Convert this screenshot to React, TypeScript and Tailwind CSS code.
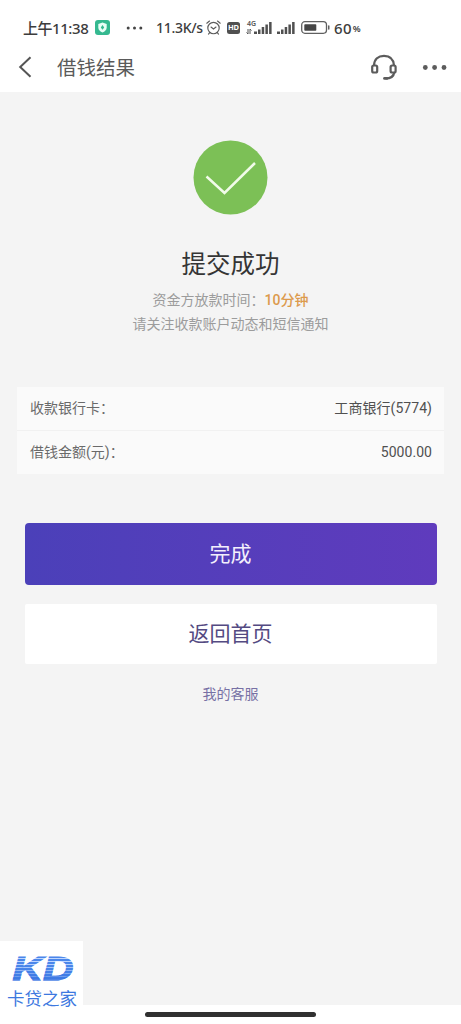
import type { ReactNode } from "react";

function SignalBars() {
  return (
    <svg className="h-[12px] w-[18px] shrink-0" viewBox="0 0 18 12" fill="#505050">
      <rect x="0" y="9.5" width="3" height="2.5" />
      <rect x="4" y="7.5" width="2.5" height="4.5" />
      <rect x="7.7" y="5" width="2.5" height="7" />
      <rect x="11.4" y="2.5" width="2.5" height="9.5" />
      <rect x="15.1" y="0" width="2.5" height="12" />
    </svg>
  );
}

function StatusBar() {
  return (
    <div className="flex h-[42px] items-center pt-[13px] pl-[23px] font-['Noto_Sans','Noto_Sans_CJK_SC',sans-serif] text-[15px] leading-[28px] font-medium text-[#3d3d3d]">
      <span className="w-[72px] shrink-0 whitespace-nowrap tracking-[-0.45px]">
        <span className="font-['Noto_Sans_CJK_SC',sans-serif]">上午</span>11:38
      </span>
      <svg className="h-[15px] w-[15px] shrink-0" viewBox="0 0 15 15">
        <rect width="15" height="15" rx="3" fill="#35b990" />
        <path d="M7.5 2.5 11.7 4v3.6c0 2.4-1.9 4.1-4.2 5-2.3-.9-4.2-2.6-4.2-5V4Z" fill="#e9fff7" />
        <path d="m7.5 5 1.7 2.4-1.7 2.4-1.7-2.4Z" fill="#35b990" />
      </svg>
      <svg className="ml-[16px] h-[4px] w-[17px] shrink-0" viewBox="0 0 17 4" fill="#444">
        <circle cx="2.2" cy="2" r="1.5" />
        <circle cx="8.5" cy="2" r="1.5" />
        <circle cx="14.8" cy="2" r="1.5" />
      </svg>
      <span className="ml-[13px] w-[50px] shrink-0 whitespace-nowrap text-[14px] tracking-[-0.3px]">11.3K/s</span>
      <svg className="h-[15px] w-[15px] shrink-0" viewBox="0 0 15 15" fill="none" stroke="#5c5c5c" strokeWidth="1.15" strokeLinecap="round">
        <circle cx="7.5" cy="8" r="5.7" />
        <path d="M.8 3.2 3.5 1M14.2 3.2 11.5 1M5 7l2.5 2L10 7M3.7 12.6l-1.2 1.5M11.3 12.6l1.2 1.5" />
      </svg>
      <span className="ml-[6px] flex h-[12px] w-[13px] shrink-0 items-center justify-center rounded-[2.5px] bg-[#505050] text-[7.5px] leading-none font-bold tracking-[-0.2px] text-white">
        HD
      </span>
      <span className="ml-[7px] flex h-[16px] w-[7px] shrink-0 flex-col text-[7px] leading-[8px] font-semibold text-[#555]">
        4G
        <svg className="mt-[1px] ml-[-1px] h-[5px] w-[6px]" viewBox="0 0 6 5" fill="none" stroke="#555" strokeWidth="1">
          <path d="M2 0v5L.5 3.5M4 5V0l1.5 1.5" />
        </svg>
      </span>
      <SignalBars />
      <span className="ml-[5px] flex">
        <SignalBars />
      </span>
      <svg className="ml-[6px] h-[13px] w-[29px] shrink-0" viewBox="0 0 29 13">
        <rect x=".7" y=".7" width="24.8" height="11.6" rx="3.2" fill="none" stroke="#606060" strokeWidth="1.3" />
        <rect x="3.3" y="3.2" width="12" height="6.6" rx=".8" fill="#454545" />
        <rect x="27" y="4.3" width="1.5" height="4.4" rx=".7" fill="#606060" />
      </svg>
      <span className="ml-[4px] text-[15px] tracking-[0.3px]">60</span>
      <span className="ml-[1px] pt-[2px] text-[9px] font-semibold">%</span>
    </div>
  );
}

function Header() {
  return (
    <div className="flex h-[50px] items-center pl-[18px]">
      <svg className="h-[22px] w-[14px]" viewBox="0 0 14 22" fill="none" stroke="#555" strokeWidth="2">
        <path d="M12.5 1.2 2.2 11l10.3 9.8" />
      </svg>
      <h1 className="ml-[25px] text-[19.5px] leading-[28px] text-[#5a5a5a]">借钱结果</h1>
      <svg className="ml-auto h-[27px] w-[28px]" viewBox="0 0 28 27" fill="none" stroke="#5c5c5c" strokeWidth="2.2">
        <path d="M4 11.5C4.2 5.2 8.2 1.8 14 1.8s9.6 3.4 10 9.7" />
        <rect x="2.2" y="11.5" width="5" height="7" rx="1.5" />
        <rect x="20.6" y="11.5" width="5" height="7" rx="1.5" />
        <path d="M24.2 18.5c-.5 4-3.4 6-8.7 6" />
        <path d="M14.5 24.4h2.5" strokeWidth="2.8" strokeLinecap="round" />
      </svg>
      <svg className="mr-[13px] ml-[24px] h-[5px] w-[26px] shrink-0" viewBox="0 0 26 5" fill="#5c5c5c">
        <circle cx="3.3" cy="2.5" r="2.4" />
        <circle cx="12.6" cy="2.5" r="2.4" />
        <circle cx="22" cy="2.5" r="2.4" />
      </svg>
    </div>
  );
}

function DetailRow({ label, children }: { label: string; children: ReactNode }) {
  return (
    <div className="flex h-[43px] items-center justify-between bg-[#fafafa] pr-[12px] pl-[13px] font-[Roboto,'Noto_Sans_CJK_SC',sans-serif] text-[14px]">
      <span className="text-[#6a6a6a]">{label}</span>
      <span className="tracking-[0.05px] text-[#505050]">{children}</span>
    </div>
  );
}

function BrandMark() {
  return (
    <div className="absolute bottom-[-19px] left-0 flex h-[83px] w-[83px] flex-col bg-white pt-[5px]">
      <svg className="h-[40px] w-[83px] shrink-0" viewBox="0 0 83 40">
        <defs>
          <linearGradient id="stripes" gradientUnits="userSpaceOnUse" x1="0" y1="10.2" x2="0" y2="13.2" spreadMethod="repeat">
            <stop offset="0" stopColor="#4a86ea" />
            <stop offset=".6" stopColor="#4a86ea" />
            <stop offset=".75" stopColor="#bfd6ff" />
            <stop offset="1" stopColor="#bfd6ff" />
          </linearGradient>
          <linearGradient id="depth" gradientUnits="userSpaceOnUse" x1="0" y1="10" x2="0" y2="34">
            <stop offset=".3" stopColor="#3f7ee8" stopOpacity="0" />
            <stop offset="1" stopColor="#3873e0" stopOpacity=".75" />
          </linearGradient>
        </defs>
        <g fontFamily="Liberation Sans, sans-serif" fontSize="33" fontWeight="bold" fontStyle="italic" strokeWidth="1">
          <text x="12.5" y="33.5" textLength="61" lengthAdjust="spacingAndGlyphs" fill="url(#stripes)" stroke="url(#stripes)">
            KD
          </text>
          <text x="12.5" y="33.5" textLength="61" lengthAdjust="spacingAndGlyphs" fill="url(#depth)" stroke="url(#depth)" aria-hidden="true">
            KD
          </text>
        </g>
      </svg>
      <div className="pl-[7px] text-[17.5px] leading-[24px] font-normal whitespace-nowrap text-[#3d78df]">卡贷之家</div>
    </div>
  );
}

export default function App() {
  return (
    <div lang="zh-CN" className="flex h-[1024px] w-[461px] flex-col overflow-hidden bg-white font-['Noto_Sans_CJK_SC',sans-serif]">
      <header className="h-[92px] shrink-0">
        <StatusBar />
        <Header />
      </header>
      <main className="relative flex h-[913px] shrink-0 flex-col items-center bg-[#f4f4f4] pt-[48px]">
        <svg className="h-[75px] w-[75px] shrink-0" viewBox="0 0 75 75">
          <circle cx="37.5" cy="37.5" r="37" fill="#7cc056" />
          <path d="M13.5 36.5 31.5 53 62 23" fill="none" stroke="#f1fbe9" strokeWidth="2.5" />
        </svg>
        <h2 className="mt-[30px] text-[24.5px] leading-[36px] text-[#353535]">提交成功</h2>
        <div className="mt-[6px] text-center text-[14px] leading-[24px] text-[#9c9c9c]">
          <p className="h-[24px]">
            资金方放款时间：<span className="font-[Roboto,'Noto_Sans_CJK_SC',sans-serif] font-medium text-[#dc9a4c]">10分钟</span>
          </p>
          <p className="h-[24px]">请关注收款账户动态和短信通知</p>
        </div>
        <div className="mt-[52px] flex w-[427px] flex-col gap-px bg-[#f1f1f1]">
          <DetailRow label="收款银行卡：">工商银行(5774)</DetailRow>
          <DetailRow label="借钱金额(元)：">5000.00</DetailRow>
        </div>
        <button className="mt-[49px] h-[62px] w-[412px] shrink-0 rounded-[4px] bg-linear-to-r from-[#4b40b9] to-[#5f3bbd] pb-[3px] text-[21px] text-[#f3effc]">
          完成
        </button>
        <button className="mt-[19px] h-[60px] w-[412px] shrink-0 rounded-[2px] bg-white pb-[3px] text-[21px] text-[#544a82]">
          返回首页
        </button>
        <a className="mt-[18px] text-[14px] leading-[22px] text-[#7771a5]">我的客服</a>
        <BrandMark />
      </main>
      <footer className="flex h-[19px] shrink-0 justify-center pt-[7px]">
        <div className="h-[5px] w-[171px] rounded-full bg-[#303030]" />
      </footer>
    </div>
  );
}
